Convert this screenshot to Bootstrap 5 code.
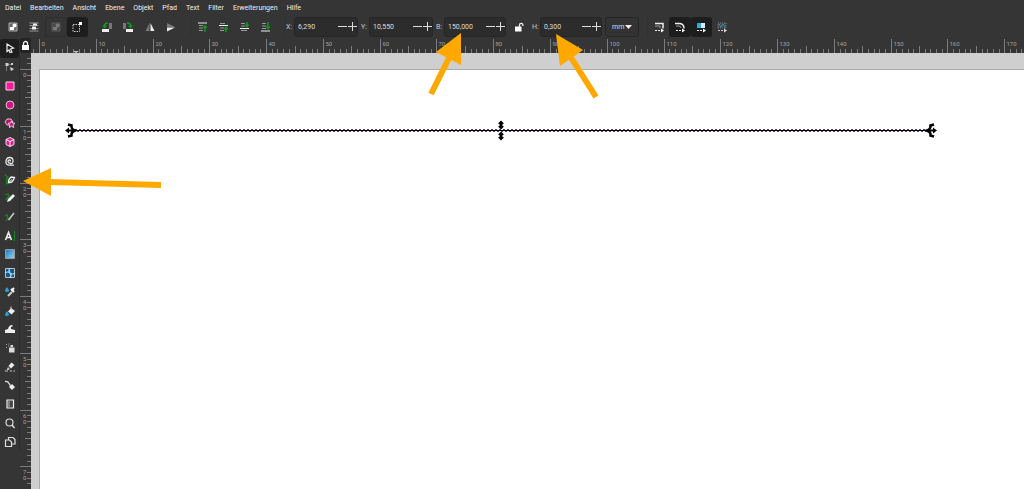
<!DOCTYPE html>
<html lang="de">
<head>
<meta charset="utf-8">
<meta name="viewport" content="width=device-width, initial-scale=1">
<title>Inkscape</title>
<link href="https://cdn.jsdelivr.net/npm/bootstrap@5.3.0/dist/css/bootstrap.min.css" rel="stylesheet">
<style>
  body { background: #353535; color: #dedede; font-family: Roboto, "Noto Sans", sans-serif; font-size: 7px; line-height: 10px; }
  a, button, input, select { color: inherit; font: inherit; }
  button { background: none; border: 0; padding: 0; }
  svg { display: block; }
  .menubar { height: 15px; gap: 9px; padding: 0 5px; }
  .menubar a { color: #f0f0f0; text-decoration: none; }
  .toolbar { height: 23px; padding: 1px 2px; }
  .toolset { display: grid; grid-template-columns: repeat(4, 1fr); width: 86px; height: 20px; margin-right: 8px; flex: none; }
  .tool { display: flex; align-items: center; justify-content: center; border-radius: 3px; min-width: 0; }
  .tool svg { width: 12px; height: 12px; }
  .tool.on { background: #1d1d1d; }
  .tool.off { box-shadow: inset 0 0 0 1px #292929; opacity: .6; }
  .divide { border-left: 1px solid #303030; }
  .fields { padding-left: 1px; }
  .caption { width: 8px; flex: none; color: #c8c8c8; }
  .spin { height: 20px; background: #2c2c2c; border: 1px solid #262626; border-radius: 3px; flex: none; width: 62px; margin-right: 3px; }
  .spin.wide { width: 64px; }
  .spin input { background: none; border: 0; outline: 0; padding: 0 0 0 3px; min-width: 0; flex: 1; }
  .spin button { width: 10px; height: 18px; display: flex; align-items: center; justify-content: center; }
  .lock { width: 20px; margin-right: 3px; }
  .unit { appearance: none; width: 34px; height: 20px; border: 1px solid #262626; border-radius: 3px; background: #333; padding: 0 6px; }
  .unitbox { position: relative; margin-right: 8px; }
  .unitbox svg { position: absolute; right: 7px; top: 8px; pointer-events: none; }
  .toolbox { width: 20px; height: 412px; margin-top: 1px; display: grid; grid-template-rows: repeat(22, 1fr); flex: none; border-right: 1px solid #2c2c2c; }
  .toolbox .tool { min-height: 0; }
  .toprule { height: 15px; }
  .lockbtn { width: 11px; height: 15px; background: #242424; border-radius: 3px; display: flex; align-items: center; justify-content: center; flex: none; }
  .siderule { width: 11px; flex: none; overflow: hidden; }
  .rule-text { fill: #a2a2a2; font-size: 6px; }
  .desk { background: #cfcfcf; padding: 16px 0 0 8px; min-width: 0; position: relative; }
  .sheet { background: #fff; border-left: 1px solid #aaa; border-top: 1px solid #aaa; height: 100%; }
  .drawing, .notes { position: absolute; left: 0; top: 0; width: 100%; height: 100%; pointer-events: none; overflow: hidden; }
</style>
</head>
<body class="vh-100 d-flex flex-column overflow-hidden position-relative">
<svg width="0" height="0" class="position-absolute" aria-hidden="true">
  <defs>
    <g id="minus"><path d="M0 4.500h9" stroke="#ddd"/></g>
    <g id="plus"><path d="M0 4.500h9M4.500 0v9" stroke="#ddd"/></g>
    <path id="updown" d="M0-4.500L3-1.500 1.500-1V1L3 1.500 0 4.500-3 1.500-1.500 1V-1L-3-1.500z"/>
  </defs>
</svg>

<nav class="menubar d-flex align-items-center flex-shrink-0">
  <a href="#">Datei</a><a href="#">Bearbeiten</a><a href="#">Ansicht</a><a href="#">Ebene</a><a href="#">Objekt</a><a href="#">Pfad</a><a href="#">Text</a><a href="#">Filter</a><a href="#">Erweiterungen</a><a href="#">Hilfe</a>
</nav>

<div class="toolbar d-flex align-items-center flex-shrink-0">
  <div class="toolset">
    <button class="tool" aria-label="Alles auswählen"><svg viewBox="0 0 12 12"><path d="M2 2h8v8H2z" fill="#666" stroke="#aaa"/><circle cx="7.500" cy="4.500" r="2" fill="#fff"/><path d="M3 6h4v3H3z" fill="#fff"/></svg></button>
    <button class="tool" aria-label="Alles in allen Ebenen"><svg viewBox="0 0 12 12"><path d="M1.500 2h9M1.500 4.500h9M1.500 7.500h9M1.500 10h9" stroke="#999"/><path d="M5 2.500h4v2H5zM4 5.500h4v3H4z" fill="#eee"/></svg></button>
    <button class="tool off" aria-label="Auswahl aufheben"><svg viewBox="0 0 12 12"><path d="M2 2h8v8H2z" fill="#555" stroke="#777"/><circle cx="7.500" cy="4.500" r="2" fill="#aaa"/><path d="M3 6h4v3H3z" fill="#aaa"/></svg></button>
    <button class="tool on" aria-label="Berührungsauswahl"><svg viewBox="0 0 12 12"><path d="M2 3.500h6.500v7H2z" fill="none" stroke="#ccc" stroke-dasharray="1.500 1"/><path d="M8 1h3v3H8z" fill="#fff"/></svg></button>
  </div>
  <div class="toolset">
    <button class="tool" aria-label="Gegen Uhrzeigersinn drehen"><svg viewBox="0 0 12 12"><path d="M1 8h7v3H1z" fill="#eee"/><path d="M8 2h3v6H8z" fill="#777"/><path d="M3.500 6V4.500Q3.500 2 7 2" fill="none" stroke="#119a20" stroke-width="1.500"/><path d="M1 4.500h5l-2.500 3z" fill="#119a20"/></svg></button>
    <button class="tool" aria-label="Im Uhrzeigersinn drehen"><svg viewBox="0 0 12 12"><path d="M4 8h7v3H4z" fill="#eee"/><path d="M1 2h3v6H1z" fill="#777"/><path d="M8.500 6V4.500Q8.500 2 5 2" fill="none" stroke="#119a20" stroke-width="1.500"/><path d="M6 4.500h5l-2.500 3z" fill="#119a20"/></svg></button>
    <button class="tool" aria-label="Horizontal spiegeln"><svg viewBox="0 0 12 12"><path d="M5.500 2v8H1.500z" fill="#777"/><path d="M6.500 2v8h4z" fill="#eee"/></svg></button>
    <button class="tool" aria-label="Vertikal spiegeln"><svg viewBox="0 0 12 12"><path d="M2 2v4h8z" fill="#777"/><path d="M2 10.500V6.500h8z" fill="#eee"/></svg></button>
  </div>
  <div class="toolset divide">
    <button class="tool" aria-label="Ganz nach oben"><svg viewBox="0 0 12 12"><path d="M2 2h9" stroke="#eee"/><path d="M3 4.500h4M3 7h4M3 9.500h4" stroke="#999"/><path d="M9 11V6" stroke="#119a20" stroke-width="1.500"/><path d="M6.500 7h5L9 3.500z" fill="#119a20"/></svg></button>
    <button class="tool" aria-label="Nach oben"><svg viewBox="0 0 12 12"><path d="M2 4.500h9" stroke="#eee"/><path d="M3 2.500h5M3 7h4M3 9.500h4" stroke="#999"/><path d="M9 11V8" stroke="#119a20" stroke-width="1.500"/><path d="M6.500 8.500h5L9 5z" fill="#119a20"/></svg></button>
    <button class="tool" aria-label="Nach unten"><svg viewBox="0 0 12 12"><path d="M2 7.500h9" stroke="#eee"/><path d="M3 2.500h4M3 5h4M3 9.500h6" stroke="#999"/><path d="M9 1v3" stroke="#119a20" stroke-width="1.500"/><path d="M6.500 3.500h5L9 7z" fill="#119a20"/></svg></button>
    <button class="tool" aria-label="Ganz nach unten"><svg viewBox="0 0 12 12"><path d="M2 10h9" stroke="#eee"/><path d="M3 2.500h4M3 5h4M3 7.500h4" stroke="#999"/><path d="M9 1v5" stroke="#119a20" stroke-width="1.500"/><path d="M6.500 5.500h5L9 9z" fill="#119a20"/></svg></button>
  </div>
  <div class="fields divide d-flex align-items-center">
    <label class="caption" for="vx">X:</label>
    <div class="spin wide d-flex align-items-center"><input id="vx" value="6,290"><button aria-label="X verringern"><svg width="9" height="9"><use href="#minus"/></svg></button><button aria-label="X erhöhen"><svg width="9" height="9"><use href="#plus"/></svg></button></div>
    <label class="caption" for="vy">Y:</label>
    <div class="spin wide d-flex align-items-center"><input id="vy" value="10,550"><button aria-label="Y verringern"><svg width="9" height="9"><use href="#minus"/></svg></button><button aria-label="Y erhöhen"><svg width="9" height="9"><use href="#plus"/></svg></button></div>
    <label class="caption" for="vb">B:</label>
    <div class="spin d-flex align-items-center"><input id="vb" value="150,000"><button aria-label="Breite verringern"><svg width="9" height="9"><use href="#minus"/></svg></button><button aria-label="Breite erhöhen"><svg width="9" height="9"><use href="#plus"/></svg></button></div>
    <button class="tool lock" aria-label="Seitenverhältnis sperren"><svg viewBox="0 0 12 12"><path d="M2 5.500h6.500v5H2z" fill="#fff"/><path d="M6.500 6V4a1.700 1.700 0 0 1 3.400 0V5" fill="none" stroke="#eee" stroke-width="1.300"/></svg></button>
    <label class="caption" for="vh">H:</label>
    <div class="spin d-flex align-items-center"><input id="vh" value="0,300"><button aria-label="Höhe verringern"><svg width="9" height="9"><use href="#minus"/></svg></button><button aria-label="Höhe erhöhen"><svg width="9" height="9"><use href="#plus"/></svg></button></div>
    <div class="unitbox"><select class="unit d-block" aria-label="Einheit"><option>mm</option><option>px</option></select><svg width="7" height="4"><path d="M0 0h7L3.500 4z" fill="#eee"/></svg></div>
  </div>
  <div class="toolset divide">
    <button class="tool" aria-label="Konturbreite skalieren"><svg viewBox="0 0 12 12"><path d="M2 2.500h8v5" fill="none" stroke="#eee" stroke-width="1.500"/><path d="M2 5h5v2" fill="none" stroke="#999"/><path d="M2 9.500h8" stroke="#eee" stroke-dasharray="2 1"/><path d="M8 7.500l3 2-3 2z" fill="#fff"/></svg></button>
    <button class="tool on" aria-label="Eckenradien skalieren"><svg viewBox="0 0 12 12"><path d="M1 2.500h4q5 0 5 5" fill="none" stroke="#eee" stroke-width="1.500"/><path d="M2 5h3q2 0 2 2" fill="none" stroke="#999"/><path d="M2 9.500h8" stroke="#eee" stroke-dasharray="2 1"/><path d="M8 7.500l3 2-3 2z" fill="#fff"/></svg></button>
    <button class="tool on" aria-label="Farbverläufe verschieben"><svg viewBox="0 0 12 12"><path d="M2 2h8v5H2z" fill="#2aa5ee"/><path d="M6 2h4v5H6z" fill="#d4ecfb"/><path d="M2 9.500h8" stroke="#eee" stroke-dasharray="2 1"/><path d="M8 7.500l3 2-3 2z" fill="#fff"/></svg></button>
    <button class="tool" aria-label="Muster verschieben"><svg viewBox="0 0 12 12"><path d="M2 2h8v5H2z" fill="#34454f" stroke="#888" stroke-dasharray="1 1"/><path d="M3 3l2 3 2-3 2 3" fill="none" stroke="#3f8db5"/><path d="M2 9.500h8" stroke="#ccc" stroke-dasharray="2 1"/><path d="M8 7.500l3 2-3 2z" fill="#ddd"/></svg></button>
  </div>
</div>

<main class="d-flex flex-grow-1 overflow-hidden">
  <div class="toolbox" role="toolbar" aria-label="Werkzeuge">
    <button class="tool on" aria-label="Auswahl"><svg viewBox="0 0 12 12"><path d="M3 2l6.500 4-3 1 1.500 3-2 .5L5 8 3 9.500z" fill="#222" stroke="#eee" stroke-width="1.200"/></svg></button>
    <button class="tool" aria-label="Knoten"><svg viewBox="0 0 12 12"><path d="M2.500 10V3.500H8" fill="none" stroke="#777"/><path d="M1.500 2h3v3h-3zM7 2h2v2H7z" fill="#ccc"/><path d="M6 6l4 2-3 2z" fill="#ddd"/></svg></button>
    <button class="tool" aria-label="Rechteck"><svg viewBox="0 0 12 12"><path d="M2 2h8v8H2z" fill="#ff1a9d" stroke="#f2d6e6"/></svg></button>
    <button class="tool" aria-label="Ellipse"><svg viewBox="0 0 12 12"><circle cx="6" cy="6" r="4" fill="#cf1685" stroke="#e5bdd3"/></svg></button>
    <button class="tool" aria-label="Stern"><svg viewBox="0 0 12 12"><path d="M3 2h4l2 3-2 3H3L1 5z" fill="#b51276" stroke="#e3c2d3"/><path d="M7.500 4l1 2 2.500.3-1.800 1.700.5 2.500-2.200-1.200-2.200 1.200.5-2.500L4 6.300 6.500 6z" fill="#c01c80" stroke="#eee" stroke-width=".8"/></svg></button>
    <button class="tool" aria-label="3D-Box"><svg viewBox="0 0 12 12"><path d="M6 1.500l4 2v5l-4 2-4-2v-5z" fill="#e31991" stroke="#f3d9e7"/><path d="M2 3.500l4 2 4-2M6 5.500v5" stroke="#fff" fill="none"/></svg></button>
    <button class="tool" aria-label="Spirale"><svg viewBox="0 0 12 12"><path d="M6 6.500q1-1.500-.5-1.500Q4 5 4 6.500T6.500 8.500 9 5.800 5.800 2.500 2 6t3 4.200H10" fill="none" stroke="#e5e5e5" stroke-width="1.300"/></svg></button>
    <button class="tool" aria-label="Füller"><svg viewBox="0 0 12 12"><path d="M1 1.500l3 3-1.500 2v4H5" fill="none" stroke="#138a24" stroke-width="1.300"/><path d="M10.500 4.500L7 4Q4 6.500 4.500 9.500q4 1 6-5z" fill="#444" stroke="#eee" stroke-width="1.300"/><path d="M4.500 9.500L8 6.500" stroke="#eee"/></svg></button>
    <button class="tool" aria-label="Stift"><svg viewBox="0 0 12 12"><path d="M1 3l3-1 1 2-3 4" fill="none" stroke="#138a24" stroke-width="1.300"/><path d="M9 2l2 2-5 5-3 1 1-3z" fill="#eee"/></svg></button>
    <button class="tool" aria-label="Kalligrafie"><svg viewBox="0 0 12 12"><path d="M1 5l2-1 1 3-2 3" fill="none" stroke="#138a24" stroke-width="1.300"/><path d="M10 2L4.500 9" stroke="#ccc" stroke-width="1.500"/></svg></button>
    <button class="tool" aria-label="Text"><svg viewBox="0 0 12 12"><path d="M1.500 10L4.500 2.500 7.500 10M2.800 7.500h3.500" fill="none" stroke="#eee" stroke-width="1.600"/><path d="M10.500 1v10" stroke="#138a24"/></svg></button>
    <button class="tool" aria-label="Farbverlauf"><svg viewBox="0 0 12 12"><defs><linearGradient id="gr" x2="1" y2="1"><stop stop-color="#1679c4"/><stop offset="1" stop-color="#9bd4f7"/></linearGradient></defs><path d="M1.500 1.500h9v9h-9z" fill="url(#gr)" stroke="#999"/></svg></button>
    <button class="tool" aria-label="Gitterverlauf"><svg viewBox="0 0 12 12"><path d="M1.500 1.500h9v9h-9z" fill="#185781" stroke="#b6c0c6"/><path d="M6 1q-2 2.500 0 5t0 5M1 6q2.500-2 5 0t5 0" fill="none" stroke="#9edcff" stroke-width="1.200"/></svg></button>
    <button class="tool" aria-label="Pipette"><svg viewBox="0 0 12 12"><path d="M4 10l4-4" stroke="#ccc" stroke-width="2"/><path d="M7 3l3 3M7.500 4.500L10 2" stroke="#fff" stroke-width="2"/><path d="M3 1q4 5 0 5T3 1" fill="#28a0e8"/></svg></button>
    <button class="tool" aria-label="Füllen"><svg viewBox="0 0 12 12"><path d="M7 3l4 3-3.500 3.500L4 6.500z" fill="#eee"/><path d="M7 5V1.500" stroke="#ccc"/><path d="M3 6q4 5 0 5T3 6" fill="#28a0e8"/></svg></button>
    <button class="tool" aria-label="Modellieren"><svg viewBox="0 0 12 12"><path d="M1 10V7l3-1Q5 2 8 2l1 1-2 1v2l4 1v3z" fill="#eee"/></svg></button>
    <button class="tool" aria-label="Sprühdose"><svg viewBox="0 0 12 12"><path d="M5 5.500h5.500v5H5zM6.500 3H9v2H6.500z" fill="#ddd"/><path d="M2 2.500h1M4 4h1M2 5.500h1M4.500 2h1" stroke="#aaa"/></svg></button>
    <button class="tool" aria-label="Radierer"><svg viewBox="0 0 12 12"><path d="M7.500 1.500l3 2.500L7 7.500 4.500 5z" fill="#eee"/><path d="M4 6l2 2-1.500 1H2.500z" fill="#bbb"/><path d="M1 10h3M6 10h2M9.500 10h1.500" stroke="#ccc"/></svg></button>
    <button class="tool" aria-label="Verbinder"><svg viewBox="0 0 12 12"><path d="M1 2.500q3-.5 4 2t3 3" fill="none" stroke="#ddd" stroke-width="1.300"/><path d="M8 5l3 3-3 3-3-3z" fill="#eee"/></svg></button>
    <button class="tool" aria-label="Lineal"><svg viewBox="0 0 12 12"><path d="M3 2h6.500v8H3z" fill="#444" stroke="#eee" stroke-width="1.200"/><path d="M4 4h2M4 6h2M4 8h2" stroke="#bbb"/></svg></button>
    <button class="tool" aria-label="Zoom"><svg viewBox="0 0 12 12"><circle cx="5.500" cy="5.500" r="3.500" fill="none" stroke="#ddd" stroke-width="1.200"/><path d="M8 8l2.500 3" stroke="#ddd" stroke-width="1.400"/></svg></button>
    <button class="tool" aria-label="Seiten"><svg viewBox="0 0 12 12"><path d="M4.500 1.500H9l2 2v4.500H4.500z" fill="#353535" stroke="#ddd" stroke-width="1.200"/><path d="M1.500 4h4l2 2v4.500h-6z" fill="#353535" stroke="#ddd" stroke-width="1.200"/></svg></button>
  </div>
  <div class="d-flex flex-column flex-grow-1 overflow-hidden">
    <div class="toprule d-flex flex-shrink-0">
      <button class="lockbtn" aria-label="Hilfslinien sperren"><svg width="9" height="11" viewBox="0 0 9 11"><path d="M1 5h7v5H1z" fill="#fff"/><path d="M2.500 5V3.500a2 2 0 0 1 4 0V5" fill="none" stroke="#eee" stroke-width="1.300"/></svg></button>
      <svg id="hrule" class="flex-grow-1" height="15"></svg>
    </div>
    <div class="d-flex flex-grow-1 overflow-hidden">
      <div class="siderule"><svg id="vrule" width="11" height="100%"></svg></div>
      <div class="desk flex-grow-1">
        <div class="sheet"></div>
        <svg class="drawing">
          <path d="M44 77.500H898" stroke="#000"/>
          <path d="M44 76.500H898" stroke="#1a1a50" stroke-dasharray="2 2" opacity=".8"/>
          <path d="M46 78.500H898" stroke="#1a1a50" stroke-dasharray="2 2" opacity=".8"/>
          <use href="#updown" x="470" y="72"/><use href="#updown" x="470" y="83"/>
          <g id="fan"><path d="M34 77.500l4-3v2h6v2h-6v2z"/><path d="M37 71.500l3.500 1Q40 76 44 77.500 40 79 40.500 82.500L37 83.500" fill="none" stroke="#000" stroke-width="2.500"/></g>
          <use href="#fan" transform="matrix(-1 0 0 1 940 0)"/>
        </svg>
      </div>
    </div>
  </div>
</main>

<svg class="notes" fill="#ffa900" stroke="#ffa900" aria-hidden="true">
  <path d="M431 94L449 58M596 97L570 56M161 185L50 182" stroke-width="6"/>
  <path d="M461 33V65L436 52zM556 34L583 50 560 66zM23 181L51 168V196z" stroke="none"/>
</svg>

<script src="https://cdn.jsdelivr.net/npm/bootstrap@5.3.0/dist/js/bootstrap.bundle.min.js"></script>
<script>
  // Rulers: one tick per millimetre, longer at 5 and 10, as far as the window reaches.
  const unit = 5.678;
  const hrule = document.getElementById('hrule'), vrule = document.getElementById('vrule');

  function drawRulers() {
    const width = hrule.getBoundingClientRect().width, height = vrule.getBoundingClientRect().height;
    let across = '', down = '';
    for (let i = -1; 8 + i * unit < width; i++) {
      const p = Math.round(8 + i * unit) + .5, major = i % 10 === 0;
      across += `<path d="M${p} ${major ? 1 : i % 5 === 0 ? 8 : 11}V15" stroke="#7c7c7c"/>`;
      if (major && p + 14 < width) across += `<text class="rule-text" x="${p + 2}" y="8">${i}</text>`;
    }
    for (let i = -2; 16 + i * unit < height; i++) {
      const q = Math.round(16 + i * unit) + .5, major = i % 10 === 0;
      down += `<path d="M${major ? 0 : i % 5 === 0 ? 5 : 7} ${q}H11" stroke="#7c7c7c"/>`;
      if (major) [...String(i)].forEach((c, k) => {
        const y = q + 7 + k * 6;
        if (y < height) down += `<text class="rule-text" x="3" y="${y}">${c}</text>`;
      });
    }
    // Pointer position marker.
    across += '<path d="M42 13h6l-3 2z" fill="#ccc"/>';
    hrule.innerHTML = across;
    vrule.innerHTML = down;
  }
  drawRulers();
  addEventListener('resize', drawRulers);
</script>
</body>
</html>
